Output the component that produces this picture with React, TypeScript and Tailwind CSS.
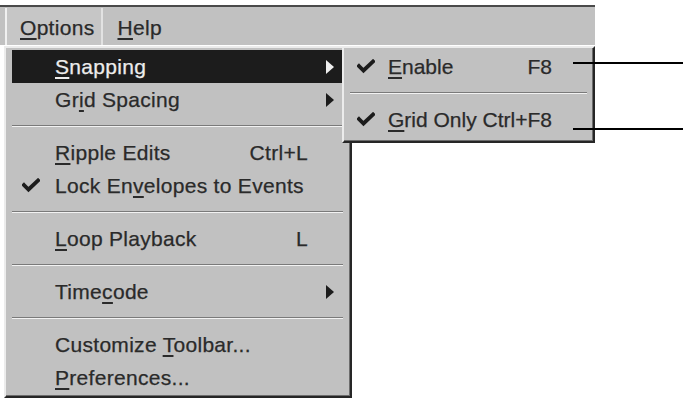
import React from 'react';

type Item =
  | { kind: 'sep' }
  | { kind: 'item'; label: React.ReactNode; shortcut?: string; checked?: boolean; submenu?: boolean; active?: boolean };

const U = ({ children }: { children: React.ReactNode }) => <span className="underline decoration-[1.5px] underline-offset-[3px]">{children}</span>;

function Check({ light }: { light?: boolean }) {
  return (
    <svg width="18" height="15" viewBox="0 0 18 15" className="block">
      <path d="M2 7 L6.5 11.5 L16 2.5" fill="none" stroke={light ? '#eee' : '#1c1c1c'} strokeWidth="3.8" strokeLinecap="square" />
    </svg>
  );
}

function Arrow({ light }: { light?: boolean }) {
  return (
    <svg width="8" height="14" viewBox="0 0 8 14" className="block">
      <path d="M0 0 L8 7 L0 14 Z" fill={light ? '#eee' : '#1c1c1c'} />
    </svg>
  );
}

const optionsMenu: Item[] = [
  { kind: 'item', label: <><U>S</U>napping</>, submenu: true, active: true },
  { kind: 'item', label: <>Gr<U>i</U>d Spacing</>, submenu: true },
  { kind: 'sep' },
  { kind: 'item', label: <><U>R</U>ipple Edits</>, shortcut: 'Ctrl+L' },
  { kind: 'item', label: <>Lock En<U>v</U>elopes to Events</>, checked: true },
  { kind: 'sep' },
  { kind: 'item', label: <><U>L</U>oop Playback</>, shortcut: 'L' },
  { kind: 'sep' },
  { kind: 'item', label: <>Time<U>c</U>ode</>, submenu: true },
  { kind: 'sep' },
  { kind: 'item', label: <>Customize <U>T</U>oolbar...</> },
  { kind: 'item', label: <><U>P</U>references...</> },
];

const snapMenu: Item[] = [
  { kind: 'item', label: <><U>E</U>nable</>, shortcut: 'F8', checked: true },
  { kind: 'sep' },
  { kind: 'item', label: <><U>G</U>rid Only</>, shortcut: 'Ctrl+F8', checked: true },
];

function Separator() {
  return (
    <div className="h-[20px] flex flex-col justify-center">
      <div className="h-px bg-[#7a7a7a]" />
      <div className="h-px bg-[#f2f2f2]" />
    </div>
  );
}

const panel = 'absolute bg-[#c1c1c1] border-2 border-t-[#ececec] border-l-[#ececec] border-r-[#262626] border-b-[#262626] shadow-[inset_-1px_-1px_0_#6c6c6c]';

export default function App() {
  return (
    <div className="relative w-[683px] h-[400px] bg-white overflow-hidden font-['Liberation_Sans',Arial,sans-serif] text-[21px] tracking-[0.3px] text-[#2a2a2a] [-webkit-text-stroke:0.25px_currentColor]">
      {/* menu bar */}
      <div className="mt-[5px] w-[595px] h-[40px] border-t-2 border-[#4a4a4a] bg-[#c1c1c1] flex items-stretch pl-[5px] pt-px">
        <div className="flex items-center pt-[2px] pl-[13px] pr-[7px] border-l-2 border-l-[#f0f0f0] border-r-2 border-r-[#e2e2e2] bg-[#c6c6c6]">
          <span><U>O</U>ptions</span>
        </div>
        <div className="flex items-center pt-[2px] pl-[14px]">
          <span><U>H</U>elp</span>
        </div>
      </div>

      {/* Options dropdown */}
      <div className={`${panel} left-[4px] top-[46px] w-[348px] h-[352px] pl-[6px] pr-[7px] pt-[2px]`}>
        {optionsMenu.map((it, i) =>
          it.kind === 'sep' ? (
            <Separator key={i} />
          ) : (
            <div key={i} className={`h-[33px] flex items-center ${it.active ? 'bg-[#1c1c1c] text-[#ececec]' : ''}`}>
              <div className="w-[43px] pl-[10px]">{it.checked && <Check light={it.active} />}</div>
              <div className="flex-1 whitespace-nowrap">{it.label}</div>
              <div className="whitespace-nowrap">{it.shortcut}</div>
              <div className="w-[35px] pl-[18px]">{it.submenu && <Arrow light={it.active} />}</div>
            </div>
          )
        )}
      </div>

      {/* Snapping submenu */}
      <div className={`${panel} left-[342px] top-[46px] w-[253px] h-[97px] px-[4px] pt-[2px] tracking-normal`}>
        {snapMenu.map((it, i) =>
          it.kind === 'sep' ? (
            <div key={i} className="px-[2px]"><Separator /></div>
          ) : (
            <div key={i} className="h-[33px] flex items-center pr-[37px]">
              <div className="w-[40px] pl-[9px]">{it.checked && <Check />}</div>
              <div className="flex-1 whitespace-nowrap">{it.label}</div>
              <div className="whitespace-nowrap">{it.shortcut}</div>
            </div>
          )
        )}
      </div>

      {/* callout lines */}
      <div className="absolute left-[573px] top-[62px] w-[110px] h-[2px] bg-black" />
      <div className="absolute left-[573px] top-[128px] w-[110px] h-[2px] bg-black" />
    </div>
  );
}
